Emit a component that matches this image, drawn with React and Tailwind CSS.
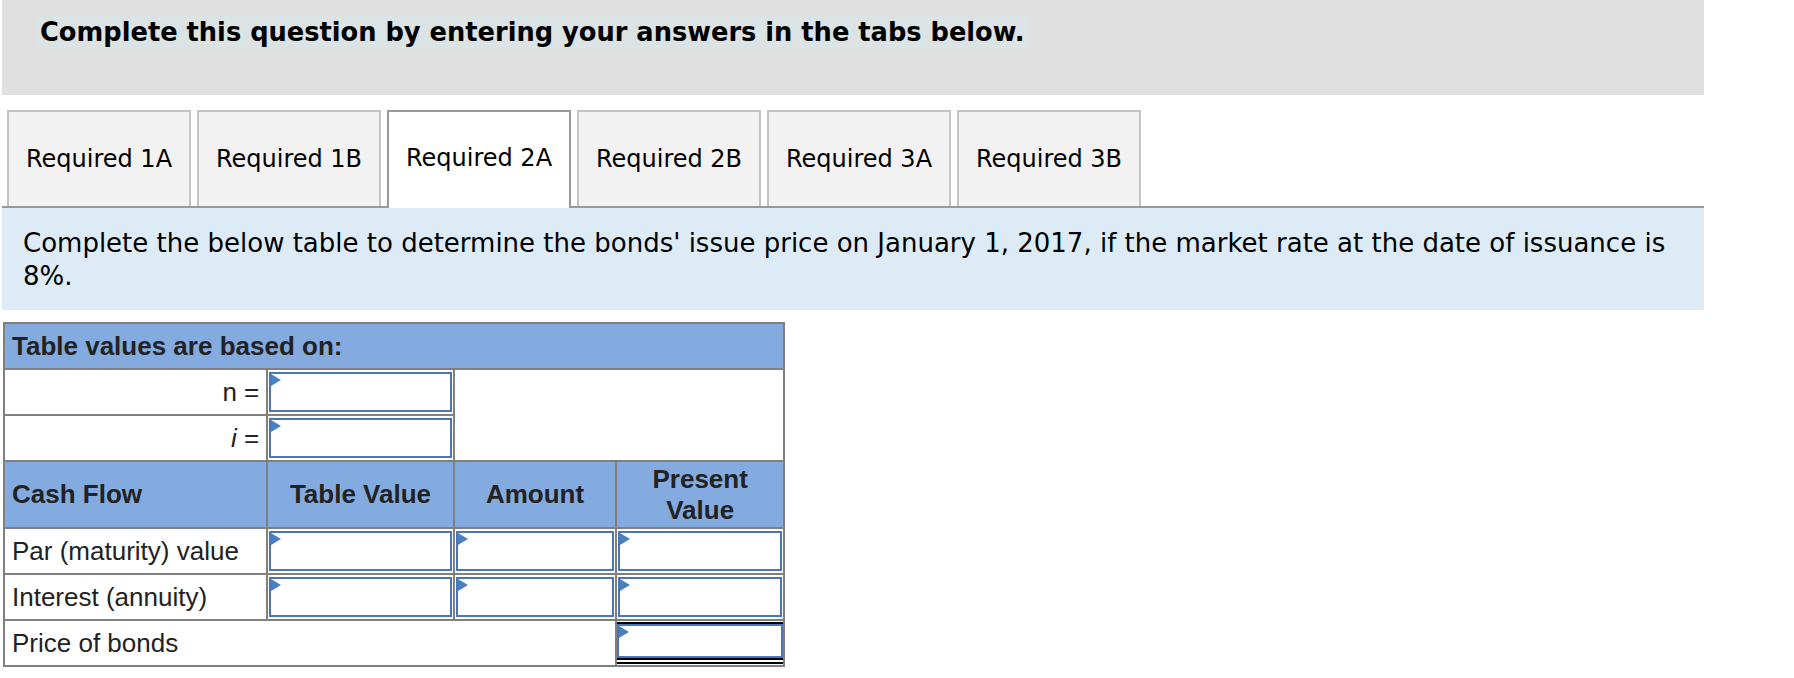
import React from "react";

const tabs = ["Required 1A", "Required 1B", "Required 2A", "Required 2B", "Required 3A", "Required 3B"];

function InputBox({ total }) {
  return (
    <div className={total ? "border-t-2 border-b-[6px] border-double border-black" : ""}>
      <div className={"relative border-2 border-[#4a76b8] bg-white " + (total ? "h-[34px]" : "h-[40px]")}>
        <span className="absolute left-0 top-0 h-0 w-0 border-y-[6px] border-l-[10px] border-y-transparent border-l-[#4a7fc1]" />
      </div>
    </div>
  );
}

function App() {
  const tableFont = { fontFamily: '"Liberation Sans", Arial, sans-serif' };
  return (
    <div className="min-h-[678px] bg-white text-black" style={{ fontFamily: '"DejaVu Sans", Verdana, sans-serif' }}>
      <div className="ml-[2px] h-[95px] w-[1702px] bg-[#e0e0e0] pl-[35px] pt-[16px]">
        <span className="inline-block bg-[#dbe3e5] px-[3px] py-[1px] text-[25.7px] font-bold leading-[31px]">
          Complete this question by entering your answers in the tabs below.
        </span>
      </div>

      <div className="ml-[2px] w-[1702px]">
        <div className="flex items-end gap-[6px] pl-[5px] pt-[15px]">
          {tabs.map((t, i) =>
            i === 2 ? (
              <div
                key={t}
                className="relative z-10 -mb-[2px] flex h-[98px] w-[184px] items-center justify-center border-2 border-b-0 border-[#999] bg-white pb-[4px] text-[24px]"
              >
                {t}
              </div>
            ) : (
              <div
                key={t}
                className="flex h-[96px] w-[184px] items-center justify-center border-2 border-b-0 border-[#c4c4c4] bg-[#f2f2f2] text-[24px]"
              >
                {t}
              </div>
            )
          )}
        </div>
        <div className="h-[104px] border-t-2 border-[#999] bg-[#ddebf7] pl-[21px] pr-[21px] pt-[19px] text-[26px] leading-[33px]">
          Complete the below table to determine the bonds' issue price on January 1, 2017, if the market rate at the date of issuance is 8%.
        </div>
      </div>

      <table className="ml-[3px] mt-[12px] w-[782px] border-collapse text-[26px] text-[#222]" style={tableFont}>
        <colgroup>
          <col className="w-[264px]" />
          <col className="w-[187px]" />
          <col className="w-[163px]" />
          <col className="w-[168px]" />
        </colgroup>
        <tbody>
          <tr className="h-[46px] bg-[#83abdf]">
            <td colSpan={4} className="border-2 border-[#808080] px-[7px] font-bold">
              Table values are based on:
            </td>
          </tr>
          <tr className="h-[46px]">
            <td className="border-2 border-[#808080] px-[7px] text-right">n =</td>
            <td className="border-2 border-[#808080] p-[1px]">
              <InputBox />
            </td>
            <td colSpan={2} rowSpan={2} className="border-2 border-[#808080]" />
          </tr>
          <tr className="h-[46px]">
            <td className="border-2 border-[#808080] px-[7px] text-right">
              <i>i</i> =
            </td>
            <td className="border-2 border-[#808080] p-[1px]">
              <InputBox />
            </td>
          </tr>
          <tr className="h-[67px] bg-[#83abdf] font-bold leading-[31px]">
            <td className="border-2 border-[#808080] px-[7px] text-left">Cash Flow</td>
            <td className="border-2 border-[#808080] text-center">Table Value</td>
            <td className="border-2 border-[#808080] text-center">Amount</td>
            <td className="border-2 border-[#808080] text-center">
              Present
              <br />
              Value
            </td>
          </tr>
          {["Par (maturity) value", "Interest (annuity)"].map((label) => (
            <tr key={label} className="h-[46px]">
              <td className="border-2 border-[#808080] px-[7px]">{label}</td>
              <td className="border-2 border-[#808080] p-[1px]">
                <InputBox />
              </td>
              <td className="border-2 border-[#808080] p-[1px]">
                <InputBox />
              </td>
              <td className="border-2 border-[#808080] p-[1px]">
                <InputBox />
              </td>
            </tr>
          ))}
          <tr className="h-[46px]">
            <td colSpan={3} className="border-2 border-[#808080] px-[7px]">
              Price of bonds
            </td>
            <td className="border-2 border-[#808080] p-0">
              <InputBox total />
            </td>
          </tr>
        </tbody>
      </table>
    </div>
  );
}

export default App;
